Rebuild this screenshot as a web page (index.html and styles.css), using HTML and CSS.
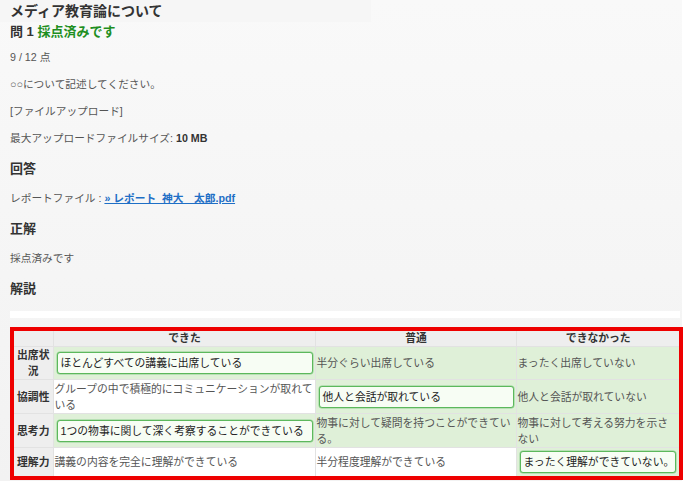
FILE: index.html
```html
<!DOCTYPE html>
<html lang="ja">
<head>
<meta charset="utf-8">
<title>メディア教育論について</title>
<link rel="stylesheet" href="styles.css">
</head>
<body>
<div class="panel">
  <h1 class="title">メディア教育論について</h1>
  <h2 class="qhead">問 1 <span class="graded">採点済みです</span></h2>
  <p class="line first">9 / 12 点</p>
  <p class="line">○○について記述してください。</p>
  <p class="line">[ファイルアップロード]</p>
  <p class="line">最大アップロードファイルサイズ: <b class="strong">10 MB</b></p>
  <h3 class="sub">回答</h3>
  <p class="line tight">レポートファイル : <a class="file" href="#">» レポート&nbsp;&nbsp;神大　太郎.pdf</a></p>
  <h3 class="sub">正解</h3>
  <p class="line tight">採点済みです</p>
  <h3 class="sub">解説</h3>
  <div class="bar"></div>
  <div class="rubric">
    <table class="grid">
      <colgroup>
        <col class="c0"><col class="c1"><col class="c2"><col class="c3">
      </colgroup>
      <tr class="hrow">
        <th class="corner"></th>
        <th>できた</th>
        <th>普通</th>
        <th>できなかった</th>
      </tr>
      <tr class="r1">
        <th class="rh">出席状況</th>
        <td class="g"><span class="choice">ほとんどすべての講義に出席している</span></td>
        <td class="g">半分ぐらい出席している</td>
        <td class="g">まったく出席していない</td>
      </tr>
      <tr class="r2">
        <th class="rh">協調性</th>
        <td>グループの中で積極的にコミュニケーションが取れている</td>
        <td class="g"><span class="choice">他人と会話が取れている</span></td>
        <td class="g">他人と会話が取れていない</td>
      </tr>
      <tr class="r3">
        <th class="rh">思考力</th>
        <td class="g"><span class="choice">1つの物事に関して深く考察することができている</span></td>
        <td class="g">物事に対して疑問を持つことができている。</td>
        <td class="g">物事に対して考える努力を示さない</td>
      </tr>
      <tr class="r4">
        <th class="rh">理解力</th>
        <td>講義の内容を完全に理解ができている</td>
        <td>半分程度理解ができている</td>
        <td class="g"><span class="choice">まったく理解ができていない。</span></td>
      </tr>
    </table>
  </div>
</div>
</body>
</html>
```

FILE: styles.css
```css
html, body {
  margin: 0;
  padding: 0;
  background: #ffffff;
}

body {
  font-family: "Liberation Sans", "Noto Sans CJK JP", sans-serif;
  color: #555555;
  width: 691px;
  height: 481px;
  overflow: hidden;
}

.panel {
  width: 682px;
  height: 481px;
  box-sizing: border-box;
  padding-left: 10px;
  background: linear-gradient(#f9f9f9, #f2f2f2);
  display: flex;
  flex-direction: column;
  align-items: flex-start;
}

.title {
  margin: 0 0 0 -10px;
  padding-left: 10px;
  width: 361px;
  font-size: 14px;
  line-height: 22px;
  font-weight: bold;
  color: #333333;
  background: #f6f6f6;
}

.qhead {
  margin: 0;
  font-size: 13px;
  line-height: 20px;
  font-weight: bold;
  color: #333333;
}

.graded {
  color: #1f8f1f;
}

.line {
  margin: 11px 0 0 0;
  font-size: 10.7px;
  line-height: 16px;
  color: #555555;
}

.line.first {
  margin-top: 7px;
}

.line.tight {
  margin-top: 11px;
}

.strong {
  color: #333333;
}

.sub {
  margin: 13px 0 0 0;
  font-size: 13px;
  line-height: 20px;
  font-weight: bold;
  color: #333333;
}

.file {
  color: #1e6fc6;
  font-weight: bold;
  text-decoration: underline;
}

.bar {
  margin-top: 12px;
  width: 670px;
  height: 7px;
  background: #ffffff;
}

.rubric {
  margin-top: 9px;
  width: 673px;
  box-sizing: border-box;
  border: 4px solid #ee0000;
  background: #ffffff;
}

.grid {
  width: 665px;
  table-layout: fixed;
  border-collapse: collapse;
  font-size: 10.8px;
  line-height: 16px;
}

.c0 { width: 39px; }
.c1 { width: 262px; }
.c2 { width: 201px; }
.c3 { width: 163px; }

.grid th,
.grid td {
  border: 1px solid #e2e2e2;
  padding: 0 0 0 1px;
  vertical-align: middle;
  text-align: left;
  color: #555555;
  font-weight: normal;
}

.grid td:last-child {
  padding-right: 3px;
}

.grid tr:first-child th { border-top: 0; }
.grid tr:last-child th,
.grid tr:last-child td { border-bottom: 0; }
.grid th:first-child { border-left: 0; }
.grid th:last-child,
.grid td:last-child { border-right: 0; }

.hrow th {
  height: 15px;
  line-height: 15px;
  background: #eeeeee;
  text-align: center;
  font-weight: bold;
  color: #333333;
}

.grid .rh {
  background: #eeeeee;
  text-align: center;
  font-weight: bold;
  color: #333333;
  padding: 0 2px;
}

.grid td.g {
  background: #dff0d8;
}

.r1 { height: 32px; }
.r2 { height: 34px; }
.r3 { height: 34px; }
.r4 { height: 28px; }

.choice {
  display: block;
  margin: 0 2px 0 2px;
  padding: 2px 3px;
  border: 1px solid #5cb85c;
  border-radius: 3px;
  box-shadow: 0 0 0 0.5px #8fd08f;
  background: #f7fdf4;
  color: #222222;
  line-height: 16px;
  white-space: nowrap;
  overflow: hidden;
}

.grid td:last-child .choice {
  margin-right: 0;
}
```
